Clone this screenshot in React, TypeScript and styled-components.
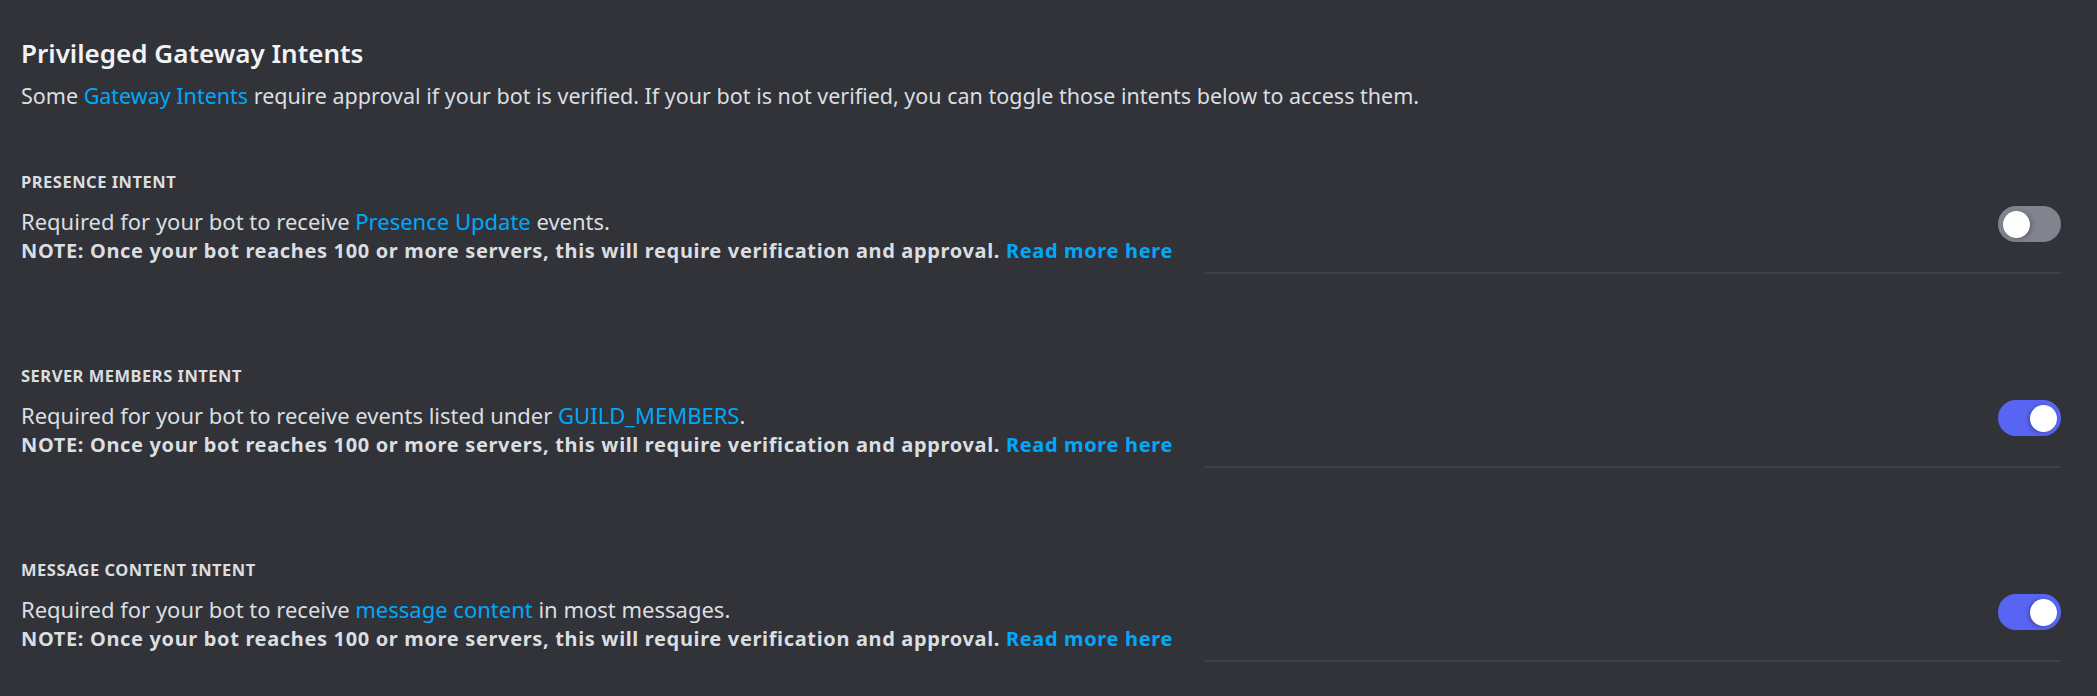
import React from "react";
import styled, { createGlobalStyle } from "styled-components";

const GlobalStyle = createGlobalStyle`
  html, body {
    margin: 0;
    padding: 0;
    background: #313338;
  }
  body {
    font-family: "Noto Sans", "Open Sans", sans-serif;
    color: #dbdee1;
  }
  * { box-sizing: border-box; }
`;

const Page = styled.main`
  padding: 36px 36px 0 21px;
  min-height: 696px;
  background: #313338;
`;

const Title = styled.h2`
  margin: 0;
  font-size: 26px;
  line-height: 34px;
  font-weight: 600;
  color: #f2f3f5;
`;

const Lead = styled.p`
  margin: 13px 0 0;
  font-size: 21.5px;
  line-height: 26px;
  font-weight: 400;
  color: #dbdee1;
`;

const Link = styled.a<{ $bold?: boolean }>`
  color: #00a8fc;
  text-decoration: none;
  font-weight: ${(p) => (p.$bold ? 700 : "inherit")};
  cursor: pointer;
`;

const IntentList = styled.div`
  display: flex;
  flex-direction: column;
  gap: 92px;
  margin-top: 63px;
`;

const Section = styled.section`
  display: flex;
  flex-direction: column;
  gap: 14px;
`;

const Label = styled.h3`
  margin: 0;
  font-size: 16.5px;
  line-height: 20px;
  letter-spacing: 0.5px;
  font-weight: 700;
  text-transform: uppercase;
  color: #dbdee1;
`;

const Row = styled.div`
  display: grid;
  grid-template-columns: 1184px 1fr;
`;

const TextCol = styled.div`
  padding-top: 1px;
  display: flex;
  flex-direction: column;
`;

const Description = styled.div`
  font-size: 22px;
  line-height: 28px;
  color: #dbdee1;
`;

const Note = styled.div`
  margin-top: 2px;
  font-size: 20px;
  line-height: 28px;
  letter-spacing: 0.65px;
  font-weight: 700;
  color: #dbdee1;
`;

const ControlCol = styled.div`
  display: flex;
  justify-content: flex-end;
  align-items: flex-start;
  padding-bottom: 30px;
  border-bottom: 2px solid #3f4147;
`;

const Switch = styled.button<{ $on: boolean }>`
  position: relative;
  width: 63px;
  height: 36px;
  border: none;
  padding: 0;
  border-radius: 18px;
  background: ${(p) => (p.$on ? "#5865f2" : "#80848e")};
  cursor: pointer;
  flex: none;
`;

const Knob = styled.span<{ $on: boolean }>`
  position: absolute;
  top: 4.5px;
  left: ${(p) => (p.$on ? "32px" : "5px")};
  width: 27px;
  height: 27px;
  border-radius: 50%;
  background: #ffffff;
  box-shadow: ${(p) =>
    p.$on ? "-2px 1px 4px rgba(0,0,0,0.25)" : "2px 1px 4px rgba(0,0,0,0.25)"};
`;

type Intent = {
  label: string;
  before: string;
  link: string;
  after: string;
  on: boolean;
};

const intents: Intent[] = [
  {
    label: "Presence Intent",
    before: "Required for your bot to receive ",
    link: "Presence Update",
    after: " events.",
    on: false,
  },
  {
    label: "Server Members Intent",
    before: "Required for your bot to receive events listed under ",
    link: "GUILD_MEMBERS",
    after: ".",
    on: true,
  },
  {
    label: "Message Content Intent",
    before: "Required for your bot to receive ",
    link: "message content",
    after: " in most messages.",
    on: true,
  },
];

export default function App() {
  return (
    <>
      <GlobalStyle />
      <Page>
        <Title>Privileged Gateway Intents</Title>
        <Lead>
          Some <Link>Gateway Intents</Link> require approval if your bot is
          verified. If your bot is not verified, you can toggle those intents
          below to access them.
        </Lead>
        <IntentList>
          {intents.map((it) => (
            <Section key={it.label}>
              <Label>{it.label}</Label>
              <Row>
                <TextCol>
                  <Description>
                    {it.before}
                    <Link>{it.link}</Link>
                    {it.after}
                  </Description>
                  <Note>
                    NOTE: Once your bot reaches 100 or more servers, this will
                    require verification and approval.{" "}
                    <Link $bold>Read more here</Link>
                  </Note>
                </TextCol>
                <ControlCol>
                  <Switch $on={it.on} aria-label={it.label} role="switch" aria-checked={it.on}>
                    <Knob $on={it.on} />
                  </Switch>
                </ControlCol>
              </Row>
            </Section>
          ))}
        </IntentList>
      </Page>
    </>
  );
}
